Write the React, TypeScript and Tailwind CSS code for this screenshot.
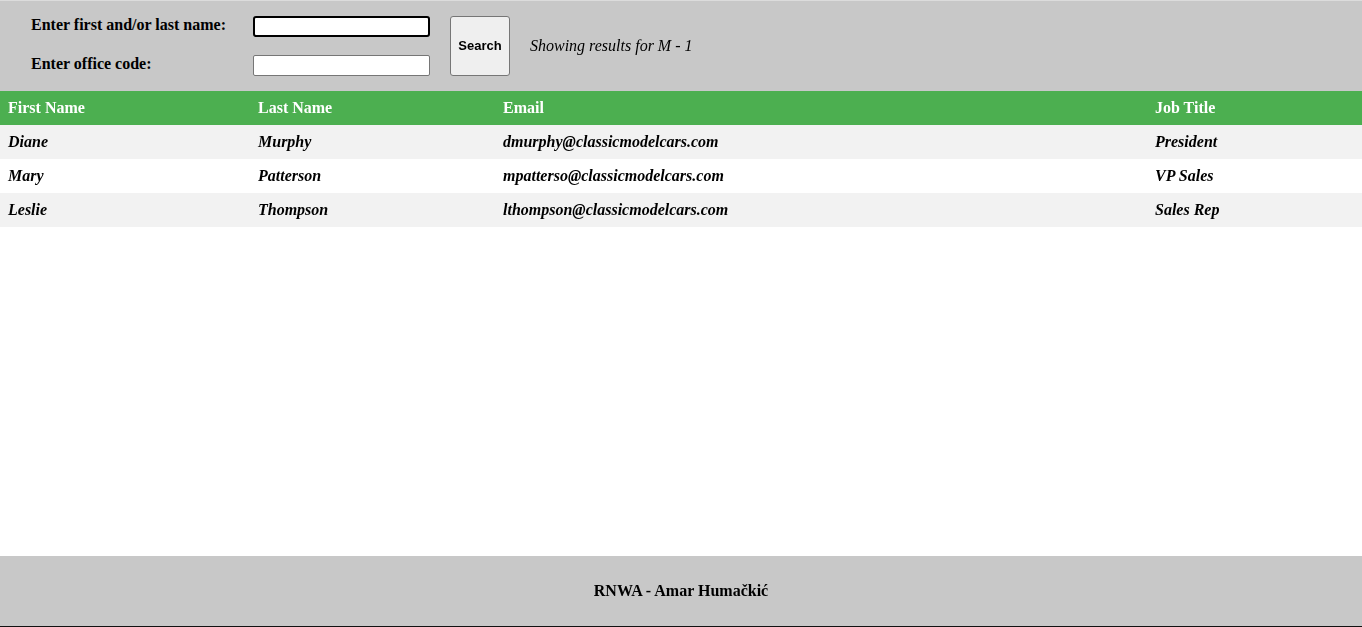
import React from 'react';

interface Employee {
  firstName: string;
  lastName: string;
  email: string;
  jobTitle: string;
}

const employees: Employee[] = [
  { firstName: 'Diane', lastName: 'Murphy', email: 'dmurphy@classicmodelcars.com', jobTitle: 'President' },
  { firstName: 'Mary', lastName: 'Patterson', email: 'mpatterso@classicmodelcars.com', jobTitle: 'VP Sales' },
  { firstName: 'Leslie', lastName: 'Thompson', email: 'lthompson@classicmodelcars.com', jobTitle: 'Sales Rep' },
];

const cols = 'grid grid-cols-[250px_245px_652px_1fr]';

const App: React.FC = () => {
  return (
    <div className="min-h-[627px] flex flex-col bg-white text-black font-['Liberation_Serif',serif] text-[16px]">
      <header className="h-[91px] bg-[#c8c8c8] border-t border-[#dcdcdc] flex items-start pt-[15px]">
        <div className="grid grid-cols-[222px_177px] grid-rows-[21px_21px] gap-y-[18px] pl-[31px]">
          <label className="font-bold leading-[18px] self-start">Enter first and/or last name:</label>
          <input
            autoFocus
            className="h-[21px] bg-white border-2 border-black rounded-[3px] outline-none px-1"
          />
          <label className="font-bold leading-[18px] self-start">Enter office code:</label>
          <input className="h-[21px] bg-white border border-[#767676] rounded-[2px] outline-none px-1" />
        </div>
        <button className="ml-[20px] w-[60px] h-[60px] bg-[#efefef] border border-[#767676] rounded-[3px] font-['Liberation_Sans',sans-serif] font-bold text-[13px]">
          Search
        </button>
        <p className="ml-[20px] h-[60px] flex items-center italic">Showing results for M - 1</p>
      </header>

      <main className="flex-1">
        <div className={`${cols} h-[34px] items-center bg-[#4caf50] text-white font-bold`}>
          <div className="px-2">First Name</div>
          <div className="px-2">Last Name</div>
          <div className="px-2">Email</div>
          <div className="px-2">Job Title</div>
        </div>
        {employees.map((e, i) => (
          <div
            key={e.email}
            className={`${cols} h-[34px] items-center font-bold italic ${i % 2 === 0 ? 'bg-[#f2f2f2]' : 'bg-white'}`}
          >
            <div className="px-2">{e.firstName}</div>
            <div className="px-2">{e.lastName}</div>
            <div className="px-2">{e.email}</div>
            <div className="px-2">{e.jobTitle}</div>
          </div>
        ))}
      </main>

      <footer className="h-[71px] bg-[#c8c8c8] border-b border-[#111] flex items-center justify-center font-bold">
        RNWA - Amar Humačkić
      </footer>
    </div>
  );
};

export default App;
